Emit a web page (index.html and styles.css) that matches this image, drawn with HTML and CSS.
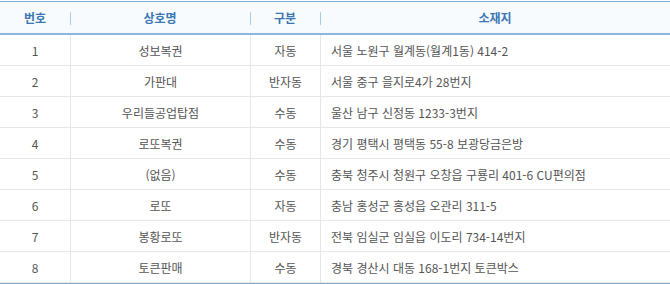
FILE: index.html
```html
<!DOCTYPE html>
<html lang="ko">
<head>
<meta charset="utf-8">
<link rel="stylesheet" href="styles.css">
</head>
<body>
<table class="shops">
  <colgroup>
    <col class="c-no"><col class="c-name"><col class="c-type"><col class="c-addr">
  </colgroup>
  <thead>
    <tr><th>번호</th><th class="sep">상호명</th><th class="sep">구분</th><th class="sep">소재지</th></tr>
  </thead>
  <tbody>
    <tr><td>1</td><td>성보복권</td><td>자동</td><td class="addr">서울 노원구 월계동(월계1동) 414-2</td></tr>
    <tr><td>2</td><td>가판대</td><td>반자동</td><td class="addr">서울 중구 을지로4가 28번지</td></tr>
    <tr><td>3</td><td>우리들공업탑점</td><td>수동</td><td class="addr">울산 남구 신정동 1233-3번지</td></tr>
    <tr><td>4</td><td>로또복권</td><td>수동</td><td class="addr">경기 평택시 평택동 55-8 보광당금은방</td></tr>
    <tr><td>5</td><td>(없음)</td><td>수동</td><td class="addr">충북 청주시 청원구 오창읍 구룡리 401-6 CU편의점</td></tr>
    <tr><td>6</td><td>로또</td><td>자동</td><td class="addr">충남 홍성군 홍성읍 오관리 311-5</td></tr>
    <tr><td>7</td><td>봉황로또</td><td>반자동</td><td class="addr">전북 임실군 임실읍 이도리 734-14번지</td></tr>
    <tr><td>8</td><td>토큰판매</td><td>수동</td><td class="addr">경북 경산시 대동 168-1번지 토큰박스</td></tr>
  </tbody>
</table>
</body>
</html>
```
FILE: styles.css
```css
html, body {
  margin: 0;
  padding: 0;
  background: #fff;
}
body {
  padding-top: 1px;
  font-family: "Noto Sans CJK KR", "Noto Sans", sans-serif;
}
.shops {
  width: 670px;
  border-collapse: separate;
  border-spacing: 0;
  table-layout: fixed;
  border-top: 1px solid #7fa9d6;
  border-bottom: 1px solid #7fa9d6;
}
.c-no { width: 70px; }
.c-name { width: 180px; }
.c-type { width: 70px; }
.c-addr { width: 350px; }
.shops th {
  height: 31px;
  padding: 0;
  background-color: #f7fbfd;
  color: #3b76b3;
  font-size: 12px;
  font-weight: bold;
  text-align: center;
  border-bottom: 2px solid #8db6df;
}
.shops th.sep {
  background-image: linear-gradient(#a8cbea, #a8cbea);
  background-repeat: no-repeat;
  background-position: 0 10px;
  background-size: 1px 13px;
}
.shops td {
  height: 30px;
  padding: 0;
  color: #555;
  font-size: 12px;
  text-align: center;
  border-bottom: 1px solid #e6e6e6;
  border-left: 1px solid #e6e6e6;
}
.shops td:first-child { border-left: none; }
.shops td.addr {
  text-align: left;
  padding-left: 10px;
}
```
